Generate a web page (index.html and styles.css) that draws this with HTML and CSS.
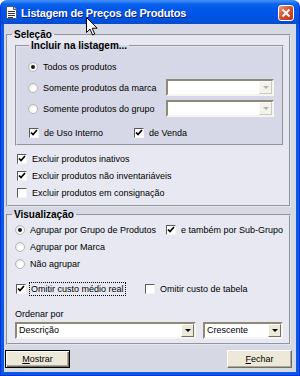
FILE: index.html
```html
<!DOCTYPE html>
<html lang="pt">
<head>
<meta charset="UTF-8">
<title>Listagem de Preços de Produtos</title>
<link rel="stylesheet" href="styles.css">
</head>
<body>
<div class="window">
    <div class="titlebar">
        <svg class="app-icon" width="11" height="13" viewBox="0 0 11 13">
            <path d="M0.5 0.5h7l3 3v9h-10z" fill="#fff" stroke="#4a5870"/>
            <path d="M7.5 0.5v3h3" fill="#d8d8d8" stroke="#4a5870"/>
            <path d="M2 5.5h7M2 7.5h7M2 9.5h7M2 11.5h5" stroke="#3a3a3a"/>
        </svg>
        <span class="title">Listagem de Preços de Produtos</span>
        <span class="close">
            <svg width="14" height="14" viewBox="0 0 14 14"><path d="M3.5 3.5l7 7M10.5 3.5l-7 7" stroke="#fff" stroke-width="2"/></svg>
        </span>
    </div>

    <div class="client">
        <fieldset class="group sel">
            <legend>Seleção</legend>
            <fieldset class="inner">
                <legend>Incluir na listagem...</legend>
                <div class="row h20">
                    <span class="opt"><span class="radio on"></span>Todos os produtos</span>
                </div>
                <div class="row h21">
                    <span class="opt col-label"><span class="radio"></span>Somente produtos da marca</span>
                    <span class="combo off"><span class="cval"></span><span class="cbtn"><i></i></span></span>
                </div>
                <div class="row h21">
                    <span class="opt col-label"><span class="radio"></span>Somente produtos do grupo</span>
                    <span class="combo off"><span class="cval"></span><span class="cbtn"><i></i></span></span>
                </div>
                <div class="row checks">
                    <span class="opt col-uso"><span class="check on"><svg width="8" height="8" viewBox="0 0 8 8"><path d="M1 3.5l2 2 4-4.5" fill="none" stroke="#000" stroke-width="1.7"/></svg></span>de Uso Interno</span>
                    <span class="opt"><span class="check on"><svg width="8" height="8" viewBox="0 0 8 8"><path d="M1 3.5l2 2 4-4.5" fill="none" stroke="#000" stroke-width="1.7"/></svg></span>de Venda</span>
                </div>
            </fieldset>
            <div class="excl">
                <div class="row h17"><span class="opt"><span class="check on"><svg width="8" height="8" viewBox="0 0 8 8"><path d="M1 3.5l2 2 4-4.5" fill="none" stroke="#000" stroke-width="1.7"/></svg></span>Excluir produtos inativos</span></div>
                <div class="row h17"><span class="opt"><span class="check on"><svg width="8" height="8" viewBox="0 0 8 8"><path d="M1 3.5l2 2 4-4.5" fill="none" stroke="#000" stroke-width="1.7"/></svg></span>Excluir produtos não inventariáveis</span></div>
                <div class="row h17"><span class="opt"><span class="check"></span>Excluir produtos em consignação</span></div>
            </div>
        </fieldset>

        <fieldset class="group vis">
            <legend>Visualização</legend>
            <div class="vis-body">
                <div class="row h17">
                    <span class="opt col-grupo"><span class="radio on"></span>Agrupar por Grupo de Produtos</span>
                    <span class="opt"><span class="check on"><svg width="8" height="8" viewBox="0 0 8 8"><path d="M1 3.5l2 2 4-4.5" fill="none" stroke="#000" stroke-width="1.7"/></svg></span>e também por Sub-Grupo</span>
                </div>
                <div class="row h17"><span class="opt"><span class="radio"></span>Agrupar por Marca</span></div>
                <div class="row h17"><span class="opt"><span class="radio"></span>Não agrupar</span></div>
                <div class="row omit">
                    <span class="opt col-omit"><span class="check on"><svg width="8" height="8" viewBox="0 0 8 8"><path d="M1 3.5l2 2 4-4.5" fill="none" stroke="#000" stroke-width="1.7"/></svg></span><span class="focus">Omitir custo médio real</span></span>
                    <span class="opt"><span class="check"></span>Omitir custo de tabela</span>
                </div>
                <div class="order-label">Ordenar por</div>
                <div class="row order">
                    <span class="combo wide"><span class="cval">Descrição</span><span class="cbtn"><i></i></span></span>
                    <span class="combo small"><span class="cval">Crescente</span><span class="cbtn"><i></i></span></span>
                </div>
            </div>
        </fieldset>

        <div class="buttons">
            <button class="push default"><u>M</u>ostrar</button>
            <button class="push"><u>F</u>echar</button>
        </div>
    </div>

    <svg class="cursor" width="13" height="20" viewBox="0 0 13 20">
        <path d="M0.5 0.5v15l3.5-3.5 2.6 6 2.2-1-2.6-5.8h5z" fill="#fff" stroke="#000"/>
    </svg>
</div>
</body>
</html>
```

FILE: styles.css
```css
body{
    margin: 0;
    font-family: "Liberation Sans", Arial, sans-serif;
    font-size: 9px;
    color: #000;
    background: #fff;
}
.window{
    position: relative;
    width: 300px;
    height: 376px;
    box-sizing: border-box;
    background: #0A5AE8;
    border: 1px solid #0831D9;
    border-top-color: #3D8BF7;
    border-radius: 7px 7px 0 0;
    display: flex;
    flex-direction: column;
    overflow: hidden;
}
.titlebar{
    height: 23px;
    flex: none;
    display: flex;
    align-items: center;
    padding: 0 5px 0 5px;
    background: linear-gradient(#3A8CF8 0px, #0B62EC 3px, #0058EA 8px, #0055E5 14px, #0050DA 20px, #0A4CC8 23px);
}
.app-icon{
    flex: none;
    margin-right: 4px;
}
.title{
    color: #fff;
    font-weight: bold;
    font-size: 11px;
    letter-spacing: -0.2px;
    text-shadow: 1px 1px 0 #0A1E8C;
}
.close{
    margin-left: auto;
    width: 14px;
    height: 14px;
    border: 1px solid #fff;
    border-radius: 3px;
    background: linear-gradient(135deg, #F09A7E, #D8542E 45%, #B83416);
    display: flex;
    align-items: center;
    justify-content: center;
}
.client{
    flex: 1;
    margin: 0 3px 3px;
    background: #D6D9E3;
    display: flex;
    flex-direction: column;
}

/* group boxes */
fieldset{
    min-width: 0;
    margin: 0;
    padding: 0;
}
legend{
    font-weight: bold;
    font-size: 10px;
    line-height: 12px;
    padding: 0 2px;
    margin-left: 4px;
}
.group{
    margin: 5px 5px 0 2px;
    border: 2px groove #E4E6EE;
    background: #E7E8F1;
}
.vis{
    margin-top: 2px;
}
.inner{
    margin: -1px 5px 0 7px;
    padding: 5px 0 3px 11px;
    border: 2px groove #E4E6EE;
    background: #D7D8E7;
}
.inner legend{
    margin-left: 1px;
}

.row{
    display: flex;
    align-items: center;
}
.h20{ height: 20px; }
.h21{ height: 21px; }
.h17{ height: 17px; }
.checks{
    height: 16px;
    margin-top: 6px;
}
.opt{
    display: flex;
    align-items: center;
    gap: 5px;
    white-space: nowrap;
}
.col-label{ width: 138px; }
.col-uso{ width: 105px; }
.col-grupo{ width: 150px; }
.col-omit{ width: 129px; }

.excl{
    padding: 4px 0 4px 8px;
}
.vis-body{
    padding: 0 0 4px 7px;
}
.omit{
    height: 16px;
    margin-top: 9px;
}
.focus{
    border: 1px dotted #000;
    padding: 1px 1px;
    margin-left: -2px;
}
.order-label{
    margin-top: 11px;
    line-height: 13px;
}
.order{
    margin-top: 1px;
    gap: 7px;
}

/* radio and check */
.radio{
    flex: none;
    width: 10px;
    height: 10px;
    box-sizing: border-box;
    border-radius: 50%;
    border: 1px solid #B4B7BE;
    background: radial-gradient(circle at 65% 65%, #fff 30%, #DCDCD6 100%);
    display: flex;
    align-items: center;
    justify-content: center;
}
.radio.on::after{
    content: "";
    width: 4px;
    height: 4px;
    border-radius: 50%;
    background: #1A1A1A;
}
.check{
    flex: none;
    width: 10px;
    height: 10px;
    margin-left: 1px;
    box-sizing: border-box;
    border: 1px solid;
    border-color: #5A5A5A #F4F4F4 #F4F4F4 #5A5A5A;
    background: #fff;
    display: flex;
    align-items: center;
    justify-content: center;
}

/* combos */
.combo{
    display: flex;
    width: 108px;
    height: 17px;
    box-sizing: border-box;
    border: 2px solid;
    border-color: #8E8A78 #F6F5EF #F6F5EF #8E8A78;
    background: #fff;
}
.combo.wide{ width: 181px; }
.combo.small{ width: 80px; }
.cval{
    flex: 1;
    padding-left: 2px;
    line-height: 13px;
}
.cbtn{
    width: 13px;
    box-sizing: border-box;
    border: 1px solid;
    border-color: #FFFFFF #716F64 #716F64 #FFFFFF;
    background: #ECE9D8;
    display: flex;
    align-items: center;
    justify-content: center;
}
.cbtn i{
    border-top: 3px solid #000;
    border-left: 3px solid transparent;
    border-right: 3px solid transparent;
}
.off .cbtn{
    background: #F3F2EC;
    border-color: #FBFBF8 #C9C7BA #C9C7BA #FBFBF8;
}
.off .cbtn i{
    border-top-color: #B4B2A6;
}

/* buttons */
.buttons{
    display: flex;
    justify-content: space-between;
    margin-top: 5px;
    padding: 0 4px 0 1px;
}
.push{
    width: 65px;
    height: 18px;
    padding: 0;
    font: inherit;
    color: #000;
    background: #ECE9D8;
    border: 1px solid;
    border-color: #FFFFFF #716F64 #716F64 #FFFFFF;
    box-shadow: inset -1px -1px 0 #ACA899;
}
.push.default{
    border-color: #000;
    box-shadow: inset 1px 1px 0 #fff, inset -1px -1px 0 #716F64, inset -2px -2px 0 #ACA899;
}

.cursor{
    position: absolute;
    left: 85px;
    top: 16px;
}
```
